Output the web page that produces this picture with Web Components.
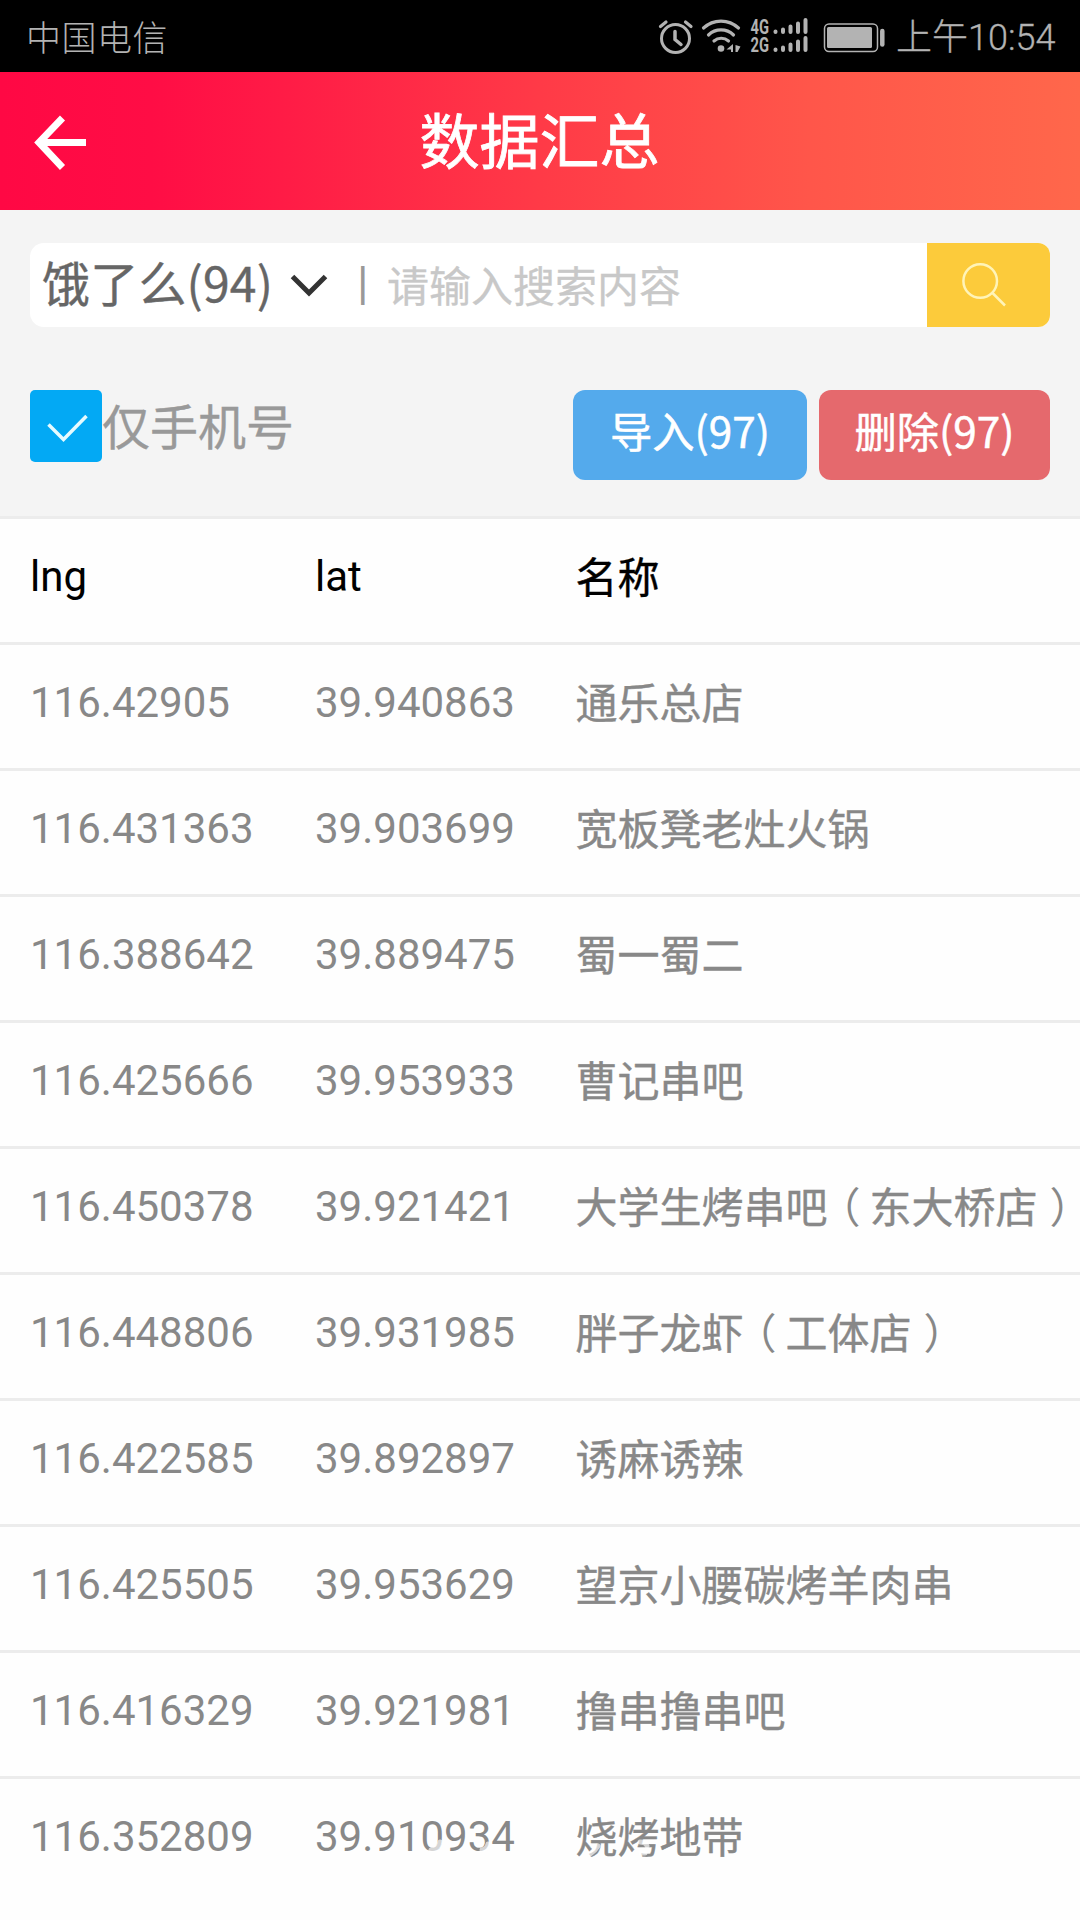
<!DOCTYPE html>
<html lang="zh-CN">
<head>
<meta charset="utf-8">
<title>数据汇总</title>
<style>
html,body{margin:0;padding:0}
body{width:1080px;height:1920px;overflow:hidden;background:#fefefe;font-family:Roboto,"Noto Sans CJK SC",sans-serif}
</style>
</head>
<body>
<data-app></data-app>
<script>
const define=(name,html,setup)=>customElements.define(name,class extends HTMLElement{
  constructor(){super();this.attachShadow({mode:'open'}).innerHTML=html;}
  connectedCallback(){if(setup)setup(this,this.shadowRoot);}
});

define('status-icons',`<style>:host{display:block;width:246px;height:72px}svg{display:block}text{font:700 20px Roboto,sans-serif}</style>
<svg width="246" height="72" viewBox="650 -.5 246 72" fill="none" stroke="#b3b3b3" stroke-linecap="round">
<circle cx="675.500" cy="38" r="14" stroke-width="3"/>
<path d="M675 31v8l6 5" stroke-width="3.500"/>
<path d="M660.500 26l5.500-4.500M691 26l-5.500-4.500" stroke-width="3.200"/>
<path d="M703.500 27.500a25.500 25.500 0 0 1 35 0M708.500 34.500a18 18 0 0 1 25 0M714 40.500a11 11 0 0 1 14.500 0" stroke-width="3.200"/>
<circle cx="721" cy="48" r="3.300" fill="#b3b3b3" stroke="none"/>
<path d="M733 43.500v8h-2v-2.500h-4.500zM735.500 44.500l5 1.500-3 5.500h-2z" fill="#b3b3b3" stroke="none"/>
<g fill="#b3b3b3" stroke="none"><text x="750.500" y="33" textLength="18.500" lengthAdjust="spacingAndGlyphs">4G</text><text x="750.500" y="51.300" textLength="18.500" lengthAdjust="spacingAndGlyphs">2G</text></g>
<g stroke-width="4"><path d="M775.500 31v.5M783 29v2.500M790.500 26v5.500M798 23v8.500M805.500 19.500v12"/><path d="M775.500 49v.5M783 47v2.500M790.500 44v5.500M798 41v8.500M805.500 37.500v12"/></g>
<rect x="824.500" y="23.500" width="53" height="27.500" rx="4.500" stroke-width="1.500"/>
<rect x="827" y="26.500" width="45" height="21" rx="1.500" fill="#b3b3b3" stroke="none"/>
<path d="M882.300 30.500v13.500" stroke-width="4.500"/>
</svg>`);

define('status-bar',`<style>:host{display:flex;height:72px;box-sizing:border-box;padding:0 24px 0 26px;background:#000;color:#b3b3b3;align-items:center;font:300 35px/72px "Noto Sans CJK SC",sans-serif}
.carrier{flex:1;letter-spacing:.5px}.time{width:160px;white-space:nowrap;font:300 36px/72px Roboto,"Noto Sans CJK SC",sans-serif;padding-top:4px;-webkit-text-stroke:.3px #b3b3b3}</style>
<span class="carrier"><slot name="carrier"></slot></span><status-icons></status-icons><span class="time"><slot name="time"></slot></span>`);

define('nav-header',`<style>:host{display:grid;grid-template-columns:120px 1fr 120px;height:137.500px;align-items:center;background:linear-gradient(90deg,#ff0844 0,#ff0d45 14%,#ff1b46 26%,#ff3a47 50%,#ff564a 75%,#ff674b 100%);color:#fff}
svg{display:block}h1{margin:0;text-align:center;font:400 60px/80px "Noto Sans CJK SC",sans-serif;padding:0 1px 5px 0;-webkit-text-stroke:.8px #fff}</style>
<svg width="120" height="137" viewBox="0 72 120 137" fill="none" stroke="#fff" stroke-width="7"><path d="M86 142.500H38M62.500 118L39 142.500l23.500 25"/></svg><h1><slot></slot></h1>`);

define('search-bar',`<style>:host{display:flex;height:84px;border-radius:14px 12px 12px 14px;overflow:hidden;background:#fff}
.pick{display:flex;align-items:center;width:327px;box-sizing:border-box;padding-left:12px;color:#666;font:400 48px/84px "Noto Sans CJK SC",sans-serif;-webkit-text-stroke:.4px #666}
.pick span{width:248px;white-space:nowrap;letter-spacing:.2px;margin-top:-9px}
.bar{width:30px;color:#999;font:400 47px/80px Roboto,sans-serif}
.hint{flex:1;color:#c8c8c8;font:400 42px/82px "Noto Sans CJK SC",sans-serif;-webkit-text-stroke:.3px #c8c8c8}
.go{width:123px;background:#fccb3b}svg{display:block}</style>
<div class="pick"><span><slot></slot></span><svg width="38" height="26" viewBox="290 273 38 26" fill="none" stroke="#333" stroke-width="5"><path d="M292.500 277.500l16.500 16.500 16.500-16.500"/></svg></div>
<div class="bar">|</div><div class="hint"><slot name="hint"></slot></div>
<div class="go"><svg width="123" height="84" viewBox="927 243 123 84" fill="none" stroke="#fff4b8" stroke-width="2.500"><circle cx="980.200" cy="281" r="16.800"/><path d="M992.500 293l12.500 12.500"/></svg></div>`);

define('check-option',`<style>:host{display:flex;color:#999;font:400 48px/68px "Noto Sans CJK SC",sans-serif;-webkit-text-stroke:.4px #999}i{width:72px;height:72px;border-radius:5px;background:#03a9f4}svg{display:block}</style>
<i><svg width="72" height="72" viewBox="30 390 72 72" fill="none" stroke="#e6fbff" stroke-width="3.500"><path d="M48.500 424.500l15 15L86.500 416"/></svg></i><span><slot></slot></span>`);

define('action-button',`<style>:host{display:block;box-sizing:border-box;height:90px;border-radius:12px;color:#fff;text-align:center;white-space:nowrap;font:400 42.300px/80px "Noto Sans CJK SC",sans-serif;-webkit-text-stroke:.5px #fff}
:host([kind=import]){width:234px;background:#54aaec}:host([kind=delete]){width:231px;background:#e5696d}</style><slot></slot>`);

define('data-row',`<style>:host{display:grid;grid-template-columns:285px 260.500px 1fr;height:126px;box-sizing:border-box;border-top:3px solid #ececec;padding-left:30px;color:#888;font:400 42px/115px Roboto,"Noto Sans CJK SC",sans-serif;white-space:nowrap;overflow:hidden}
:host([head]){color:#000}.name{font-family:"Noto Sans CJK SC",sans-serif;line-height:111px;-webkit-text-stroke:.4px currentColor}.open,.close{display:inline-block;box-sizing:border-box;width:42px;font-feature-settings:"halt";-webkit-text-stroke:0;padding-left:12px}</style><span></span><span></span><span class="name"></span>`,(el,root)=>{
  const cells=[...root.querySelectorAll('span')];
  ['lng','lat','name'].forEach((key,i)=>{
    el.getAttribute(key).split(/([（）])/).forEach(part=>{
      if(part==='（'||part==='）'){const s=document.createElement('span');s.className=part==='（'?'open':'close';s.textContent=part;cells[i].append(s);}
      else cells[i].append(part);
    });
  });
});

define('data-table',`<style>:host{display:block;background:#fefefe}</style><div></div>`,(el,root)=>{
  const rows=[['lng','lat','名称'],['116.42905','39.940863','通乐总店'],['116.431363','39.903699','宽板凳老灶火锅'],['116.388642','39.889475','蜀一蜀二'],['116.425666','39.953933','曹记串吧'],['116.450378','39.921421','大学生烤串吧（东大桥店）'],['116.448806','39.931985','胖子龙虾（工体店）'],['116.422585','39.892897','诱麻诱辣'],['116.425505','39.953629','望京小腰碳烤羊肉串'],['116.416329','39.921981','撸串撸串吧'],['116.352809','39.910934','烧烤地带']];
  root.querySelector('div').innerHTML=rows.map((r,i)=>`<data-row ${i?'':'head'} lng="${r[0]}" lat="${r[1]}" name="${r[2]}"></data-row>`).join('');
});

define('faint-marks',`<style>:host{position:absolute;left:420px;top:1836px}svg{display:block}</style>
<svg width="240" height="24" viewBox="420 1836 240 24" fill="none" stroke="#fff" stroke-opacity=".65" stroke-width="5" stroke-linecap="round"><path d="M431 1850q7 0 9-8M482 1850q5-1 6-6M590 1854q5-3 8-8M640 1842q6 0 7 4M641 1853h4"/></svg>`);

define('data-app',`<style>:host{display:flex;flex-direction:column;position:relative;width:1080px;height:1920px;overflow:hidden}
.tools{height:306.500px;box-sizing:border-box;padding:33.500px 30px 0;background:#f4f4f4}
.actions{display:flex;margin-top:63px;gap:12px}check-option{flex:1}</style>
<status-bar><span slot="carrier">中国电信</span><span slot="time">上午10:54</span></status-bar>
<nav-header>数据汇总</nav-header>
<div class="tools"><search-bar>饿了么(94)<span slot="hint">请输入搜索内容</span></search-bar>
<div class="actions"><check-option>仅手机号</check-option><action-button kind="import">导入(97)</action-button><action-button kind="delete">删除(97)</action-button></div></div>
<data-table></data-table><faint-marks></faint-marks>`);
</script>
</body>
</html>
